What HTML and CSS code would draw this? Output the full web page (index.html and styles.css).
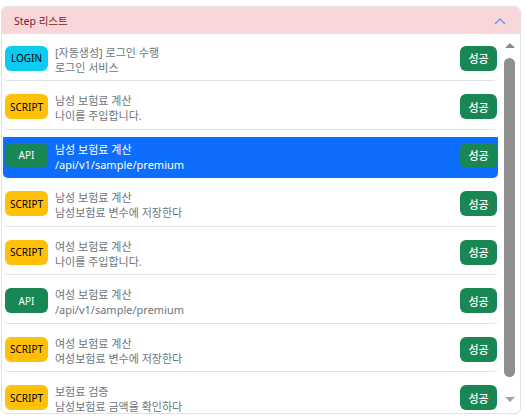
FILE: index.html
```html
<!DOCTYPE html>
<html lang="ko">
<head>
<meta charset="utf-8">
<link rel="stylesheet" href="styles.css">
</head>
<body>
<div class="card">
  <div class="card-header">
    <span class="title">Step 리스트</span>
    <svg class="chev" width="12" height="8" viewBox="0 0 12 8"><path d="M1 7 L6 2 L11 7" fill="none" stroke="#6d8fe6" stroke-width="1.3"/></svg>
  </div>
  <div class="body">
    <div class="list">
      <div class="item">
        <span class="badge login">LOGIN</span>
        <div class="txt"><div>[자동생성] 로그인 수행</div><div>로그인 서비스</div></div>
        <span class="ok">성공</span>
      </div>
      <div class="item">
        <span class="badge script">SCRIPT</span>
        <div class="txt"><div>남성 보험료 계산</div><div>나이를 주입합니다.</div></div>
        <span class="ok">성공</span>
      </div>
      <div class="item active">
        <span class="badge api">API</span>
        <div class="txt"><div>남성 보험료 계산</div><div>/api/v1/sample/premium</div></div>
        <span class="ok">성공</span>
      </div>
      <div class="item">
        <span class="badge script">SCRIPT</span>
        <div class="txt"><div>남성 보험료 계산</div><div>남성보험료 변수에 저장한다</div></div>
        <span class="ok">성공</span>
      </div>
      <div class="item">
        <span class="badge script">SCRIPT</span>
        <div class="txt"><div>여성 보험료 계산</div><div>나이를 주입합니다.</div></div>
        <span class="ok">성공</span>
      </div>
      <div class="item">
        <span class="badge api">API</span>
        <div class="txt"><div>여성 보험료 계산</div><div>/api/v1/sample/premium</div></div>
        <span class="ok">성공</span>
      </div>
      <div class="item">
        <span class="badge script">SCRIPT</span>
        <div class="txt"><div>여성 보험료 계산</div><div>여성보험료 변수에 저장한다</div></div>
        <span class="ok">성공</span>
      </div>
      <div class="item">
        <span class="badge script">SCRIPT</span>
        <div class="txt"><div>보험료 검증</div><div>남성보험료 금액을 확인하다</div></div>
        <span class="ok">성공</span>
      </div>
    </div>
    <div class="sb">
      <div class="arrow up"></div>
      <div class="thumb"></div>
      <div class="arrow down"></div>
    </div>
  </div>
</div>
</body>
</html>
```
FILE: styles.css
```css
html, body { margin: 0; padding: 0; background: #fff; }
body {
  padding: 6px 4px 0 1px;
  font-family: "Noto Sans", "Noto Sans CJK KR", sans-serif;
  font-size: 11px;
}
.card {
  width: 518px;
  border: 1px solid #dee2e6;
  border-radius: 6px;
  overflow: hidden;
}
.card-header {
  height: 27px;
  background: #f8d7da;
  display: flex;
  align-items: center;
  justify-content: space-between;
  padding: 0 14px 0 12px;
  border-radius: 5px 5px 0 0;
}
.title { color: #842029; font-size: 10.5px; }
.chev { margin-top: 1px; }
.body {
  height: 379px;
  display: flex;
  padding: 0 3px 0 1px;
}
.list {
  flex: 1;
  overflow: hidden;
  padding-top: 2px;
  margin-right: 4px;
}
.item {
  display: flex;
  align-items: center;
  height: 44px;
  padding: 0 1px 0 2px;
  border-bottom: 1px solid #dee2e6;
  border-radius: 5px;
  margin-bottom: 3.5px;
  color: #6c757d;
}
.item.active {
  background: linear-gradient(to bottom, transparent 4px, #0d6efd 4px);
  color: #fff;
  border-bottom-color: #0d6efd;
}
.badge {
  width: 43px;
  height: 25px;
  border-radius: 6px;
  display: flex;
  align-items: center;
  justify-content: center;
  font-size: 10px;
  flex: none;
}
.login { background: #0dcaf0; color: #000; }
.script { background: #ffc107; color: #000; }
.api { background: #198754; color: #fff; }
.txt {
  flex: 1;
  margin-left: 7px;
  padding-top: 3px;
  line-height: 15px;
  font-size: 11px;
}
.ok {
  width: 37px;
  height: 25px;
  border-radius: 6px;
  background: #198754;
  color: #fff;
  display: flex;
  align-items: center;
  justify-content: center;
  font-size: 11px;
  font-weight: 500;
  flex: none;
}
.sb {
  width: 15px;
  flex: none;
  display: flex;
  flex-direction: column;
  align-items: center;
  padding-top: 9px;
}
.arrow {
  width: 0;
  height: 0;
  border-left: 5px solid transparent;
  border-right: 5px solid transparent;
}
.arrow.up { border-bottom: 5px solid #8a8a8a; }
.arrow.down { border-top: 5px solid #a3a3a3; margin-top: 20px; }
.thumb {
  width: 11px;
  height: 319px;
  margin-top: 10px;
  background: #8f8f8f;
  border-radius: 6px;
}
```
